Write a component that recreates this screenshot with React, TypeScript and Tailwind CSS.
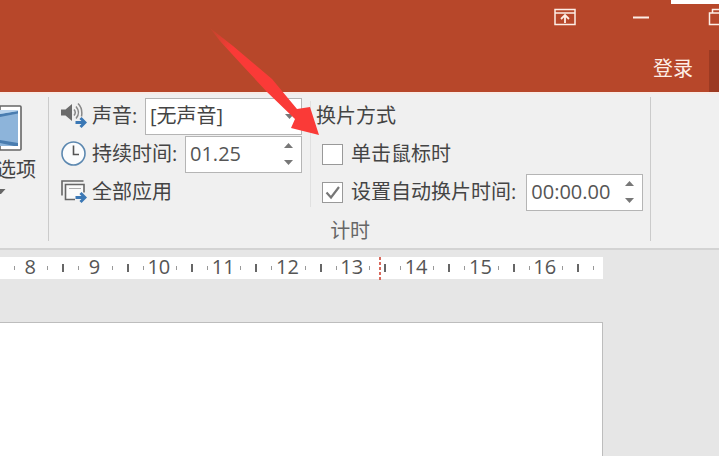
import { useState } from 'react';

const RULER_UNITS = [8, 9, 10, 11, 12, 13, 14, 15, 16];

const TitleBar = () => (
  <header className="relative bg-[#b7472a] text-[#fdeee6]">
    {/* Window controls */}
    <div className="flex h-[50px] justify-end pt-2">
      <button type="button" aria-label="功能区显示选项" className="h-[18px] w-[22px]">
        <svg width="22" height="18" viewBox="0 0 22 18" fill="none" stroke="currentColor" strokeWidth="1.5">
          <path d="M1 1.5h20v15H1z M1 5h20" />
          <path d="M11 15V7.5 M7 11 11 7 15 11" strokeWidth="1.8" />
        </svg>
      </button>
      <button type="button" aria-label="最小化" className="ml-14 h-[18px] w-[18px]">
        <svg width="18" height="18" viewBox="0 0 18 18" stroke="currentColor" strokeWidth="2">
          <path d="M1 9.5h16" />
        </svg>
      </button>
      <button type="button" aria-label="还原" className="ml-[58px] h-[18px] w-[11px] overflow-hidden">
        <svg width="22" height="18" viewBox="0 0 22 18" fill="none" stroke="currentColor" strokeWidth="1.5">
          <path d="M1.5 5h13v11.5h-13z M4.5 5V1.5h13V13h-3" />
        </svg>
      </button>
    </div>

    {/* Account row */}
    <div className="flex h-[42px] items-stretch justify-end">
      <button type="button" className="px-4 pb-1">登录</button>
      <button type="button" aria-label="共享" className="w-[10px] bg-[#9c3a22]" />
    </div>

    <div className="absolute top-0 right-0 h-1 w-12 bg-white" />
  </header>
);

const SoundIcon = () => (
  <svg className="shrink-0" width="26" height="26" viewBox="0 0 26 26" fill="none">
    <path d="M0 6.5h4.5L11 1v17l-6.5-5.5H0z" fill="#6b6b6b" />
    <path d="M13 6.5q2.5 3 0 6 M15 3.5q5 6 0 12" stroke="#888" strokeWidth="1.5" />
    <path d="M17 .5q5 5 3.5 13" stroke="#888" strokeWidth="1.5" />
    <path d="M14.5 19.5h9 M19.5 15l4.5 4.5-4.5 4.5" stroke="#3b78b5" strokeWidth="3" />
  </svg>
);

const ClockIcon = () => (
  <svg className="shrink-0" width="26" height="26" viewBox="0 0 26 26" fill="none">
    <circle cx="12.5" cy="12.5" r="11.5" fill="#fbfcfd" stroke="#5c88b0" strokeWidth="1.6" />
    <path d="M12.5 4.5v9H18" stroke="#555" strokeWidth="1.6" />
  </svg>
);

const ApplyAllIcon = () => (
  <svg className="shrink-0" width="26" height="26" viewBox="0 0 26 26" fill="none">
    <path d="M1 16.5V2h21.5" stroke="#666" strokeWidth="1.6" />
    <path d="M14 20.5H4.5v-15H23v8" fill="#fafafa" stroke="#666" strokeWidth="1.6" />
    <path d="M8 9.5h12" stroke="#aaa" />
    <path d="M14.5 18.5h9 M19.5 14l4.5 4.5-4.5 4.5" stroke="#3b78b5" strokeWidth="3" />
  </svg>
);

const Caret = ({ up = false }: { up?: boolean }) => (
  <svg width="9" height="5" viewBox="0 0 9 5" fill="#777">
    <path d={up ? 'M0 5h9L4.5 0z' : 'M0 0h9L4.5 5z'} />
  </svg>
);

const TimeBox = ({ id, initial }: { id: string; initial: string }) => {
  const [value, setValue] = useState(initial);

  return (
    <div className="flex h-[37px] w-[117px] border border-[#b5b5b5] bg-white">
      <input
        id={id}
        value={value}
        onChange={(e) => setValue(e.target.value)}
        className="w-0 flex-1 pl-1 text-[#555] outline-none"
      />
      <div className="flex w-[26px] flex-col items-center justify-center gap-3">
        <button type="button" aria-label="增加">
          <Caret up />
        </button>
        <button type="button" aria-label="减少">
          <Caret />
        </button>
      </div>
    </div>
  );
};

const CheckBox = ({ id, checked = false }: { id: string; checked?: boolean }) => (
  <span className="relative flex h-[21px] w-[21px] shrink-0">
    <input
      id={id}
      type="checkbox"
      defaultChecked={checked}
      className="peer h-full w-full appearance-none border border-[#999] bg-white"
    />
    <svg
      className="pointer-events-none absolute inset-0 hidden peer-checked:block"
      width="21"
      height="21"
      viewBox="0 0 21 21"
      fill="none"
    >
      <path d="M4.5 10.5 9 15.5 17 5" stroke="#777" strokeWidth="2.2" />
    </svg>
  </span>
);

const Ribbon = () => (
  <div className="flex border-t-2 border-b-2 border-t-[#f8ebe6] border-b-[#d3d3d3] bg-[#f0f0f0] pt-[3px] pb-[7px] text-[#444]">
    {/* Effect options, cut off by the window edge */}
    <div className="w-[49px] overflow-hidden border-r border-[#cbcbcb] pr-3">
      <button type="button" className="flex w-full flex-col items-start">
        <svg className="mt-2" width="22" height="46" viewBox="0 0 22 46">
          <path d="M0 1h20q1 0 1 1v42q0 1-1 1H0z" fill="#fff" stroke="#666" strokeWidth="1.6" />
          <path d="M0 5h18v36H0z" fill="#8db4da" />
          <path d="M0 9 18 6v2.5L0 12z M0 35l18 3v3h-4L0 38z" fill="#4a7db0" />
          <path d="M0 5h18v1L0 9z" fill="#b9d3ec" />
        </svg>
        <span className="flex h-[38px] w-full items-center justify-end whitespace-nowrap">选项</span>
        <svg width="6" height="5" viewBox="0 0 6 5" fill="#666">
          <path d="M0 0h5.5L1 5H0z" />
        </svg>
      </button>
    </div>

    {/* Timing group */}
    <fieldset className="flex flex-col border-r border-[#cbcbcb] pr-[7px] pl-3">
      <div className="flex">
        <div className="w-[241px]">
          <div className="flex h-[38px] items-center gap-[5px]">
            <SoundIcon />
            <label htmlFor="sound">声音:</label>
            <span className="relative ml-auto flex h-[37px] w-[157px]">
              <select id="sound" className="w-full appearance-none border border-[#b5b5b5] bg-white pl-1">
                <option>[无声音]</option>
              </select>
              <span className="pointer-events-none absolute top-4 right-2">
                <Caret />
              </span>
            </span>
          </div>
          <div className="flex h-[38px] items-center gap-[5px]">
            <ClockIcon />
            <label htmlFor="duration">持续时间:</label>
            <div className="ml-auto">
              <TimeBox id="duration" initial="01.25" />
            </div>
          </div>
          <button type="button" className="flex h-[38px] items-center gap-[5px]">
            <ApplyAllIcon />
            全部应用
          </button>
        </div>

        <div className="my-1 ml-2 w-px bg-[#e0e0e0]" />

        <div className="pl-[5px]">
          <div className="flex h-[38px] items-center">换片方式</div>
          <div className="flex h-[38px] items-center gap-2 pl-[6px]">
            <CheckBox id="on-click" />
            <label htmlFor="on-click">单击鼠标时</label>
          </div>
          <div className="flex h-[38px] items-center gap-2 pl-[6px]">
            <CheckBox id="auto-advance" checked />
            <label htmlFor="auto-advance" className="mr-[2px] whitespace-nowrap">
              设置自动换片时间:
            </label>
            <TimeBox id="after" initial="00:00.00" />
          </div>
        </div>
      </div>
      <div className="flex h-[30px] items-center justify-center pt-[10px] pr-1 text-[#666]">计时</div>
    </fieldset>
  </div>
);

const Ruler = () => (
  <div className="relative flex h-[22px] bg-white text-[#555]">
    {RULER_UNITS.map((unit) => (
      <div key={unit} className="flex flex-1 items-center pl-[14px]">
        <span className="h-1 w-px bg-[#999]" />
        <span className="w-0 flex-1 pr-[2px] pb-[2px] text-center leading-[18px]">{unit}</span>
        <span className="h-1 w-px bg-[#999]" />
        <span className="ml-[14px] h-2 w-[2px] bg-[#666]" />
      </div>
    ))}
    <div className="flex w-6 items-center pl-[14px]">
      <span className="h-1 w-px bg-[#999]" />
    </div>

    {/* Pointer position */}
    <svg
      className="absolute top-0 left-[379px]"
      width="2"
      height="24"
      viewBox="0 0 2 24"
      stroke="#d9695c"
      strokeWidth="2"
      strokeDasharray="3 2"
    >
      <path d="M1 0v24" />
    </svg>
  </div>
);

export default function App() {
  return (
    <div className="relative flex min-h-screen flex-col overflow-hidden bg-[#e6e6e6] font-['Open_Sans','Noto_Sans_CJK_SC',sans-serif] text-[20px] leading-[24px]">
      <TitleBar />
      <Ribbon />

      {/* Slide area */}
      <main className="flex flex-1 flex-col pt-[7px] pr-[116px]">
        <Ruler />
        <div className="mt-[43px] flex-1 border-t border-r border-[#bdbdbd] bg-white" />
      </main>

      {/* Arrow pointing at the on-click option */}
      <svg
        className="pointer-events-none absolute top-[26px] left-[208px]"
        width="114"
        height="112"
        viewBox="0 0 114 112"
      >
        <defs>
          <linearGradient id="arrow" x1="0" y1="0" x2="1" y2="1">
            <stop offset="0" stopColor="#fa3a37" stopOpacity="0.1" />
            <stop offset="0.2" stopColor="#fa3a37" />
          </linearGradient>
        </defs>
        <path d="M2 2 25 20 64 53 89 83 102 81 111 109 83 102 87 93 59 66 34 39 12 15z" fill="url(#arrow)" />
      </svg>
    </div>
  );
}
